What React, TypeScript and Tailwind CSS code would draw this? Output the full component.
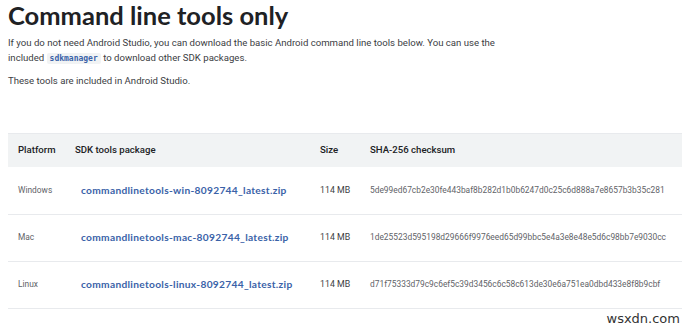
const rows = [
  {
    platform: "Windows",
    file: "commandlinetools-win-8092744_latest.zip",
    size: "114 MB",
    sha: "5de99ed67cb2e30fe443baf8b282d1b0b6247d0c25c6d888a7e8657b3b35c281",
  },
  {
    platform: "Mac",
    file: "commandlinetools-mac-8092744_latest.zip",
    size: "114 MB",
    sha: "1de25523d595198d29666f9976eed65d99bbc5e4a3e8e48e5d6c98bb7e9030cc",
  },
  {
    platform: "Linux",
    file: "commandlinetools-linux-8092744_latest.zip",
    size: "114 MB",
    sha: "d71f75333d79c9c6ef5c39d3456c6c58c613de30e6a751ea0dbd433e8f8b9cbf",
  },
];

export default function App() {
  return (
    <div className="relative w-[700px] h-[332px] overflow-hidden bg-white font-['Roboto',sans-serif] text-[#3c4043]">
      <div className="px-2">
        <h1 className="text-[25.5px] leading-[31px] font-bold text-[#202124] font-['Lato',sans-serif]">
          Command line tools only
        </h1>
        <p className="mt-[5px] text-[9.6px] leading-[14.5px] whitespace-nowrap">
          If you do not need Android Studio, you can download the basic Android command line tools below. You can use the
          <br />
          included{" "}
          <code className="rounded-[2px] bg-[#f1f3f4] px-[3px] py-[1px] font-['DejaVu_Sans_Mono',monospace] text-[8px] font-bold text-[#3a62a8]">
            sdkmanager
          </code>{" "}
          to download other SDK packages.
        </p>
        <p className="mt-[8px] text-[9.6px] leading-[14.5px]">These tools are included in Android Studio.</p>

        <table className="mt-[44px] w-[674px] table-fixed border-collapse text-left">
          <colgroup>
            <col className="w-[57px]" />
            <col className="w-[245px]" />
            <col className="w-[50px]" />
            <col />
          </colgroup>
          <thead>
            <tr className="h-[34px] border-t border-[#e8eaed] bg-[#f1f3f4] text-[9.6px] text-[#202124]">
              <th className="pl-[10px] font-medium">Platform</th>
              <th className="pl-[10px] font-medium">SDK tools package</th>
              <th className="pl-[10px] font-medium">Size</th>
              <th className="pl-[10px] font-medium">SHA-256 checksum</th>
            </tr>
          </thead>
          <tbody>
            {rows.map((r) => (
              <tr key={r.platform} className="h-[47px] border-b border-[#e8eaed] text-[8.4px] text-[#5f6368] whitespace-nowrap">
                <td className="pl-[10px] text-[8.4px]">{r.platform}</td>
                <td className="pl-[16px]">
                  <a className="font-['Lato',sans-serif] text-[10.2px] font-bold tracking-[0.3px] text-[#3a62a8]">
                    {r.file}
                  </a>
                </td>
                <td className="pl-[10px] text-[8.8px] text-[#3c4043]">{r.size}</td>
                <td className="pl-[10px]">{r.sha}</td>
              </tr>
            ))}
          </tbody>
        </table>
      </div>
      <div className="absolute right-[20px] bottom-[4px] text-[13px] text-[#333] font-['DejaVu_Sans',sans-serif]">
        wsxdn.com
      </div>
    </div>
  );
}
